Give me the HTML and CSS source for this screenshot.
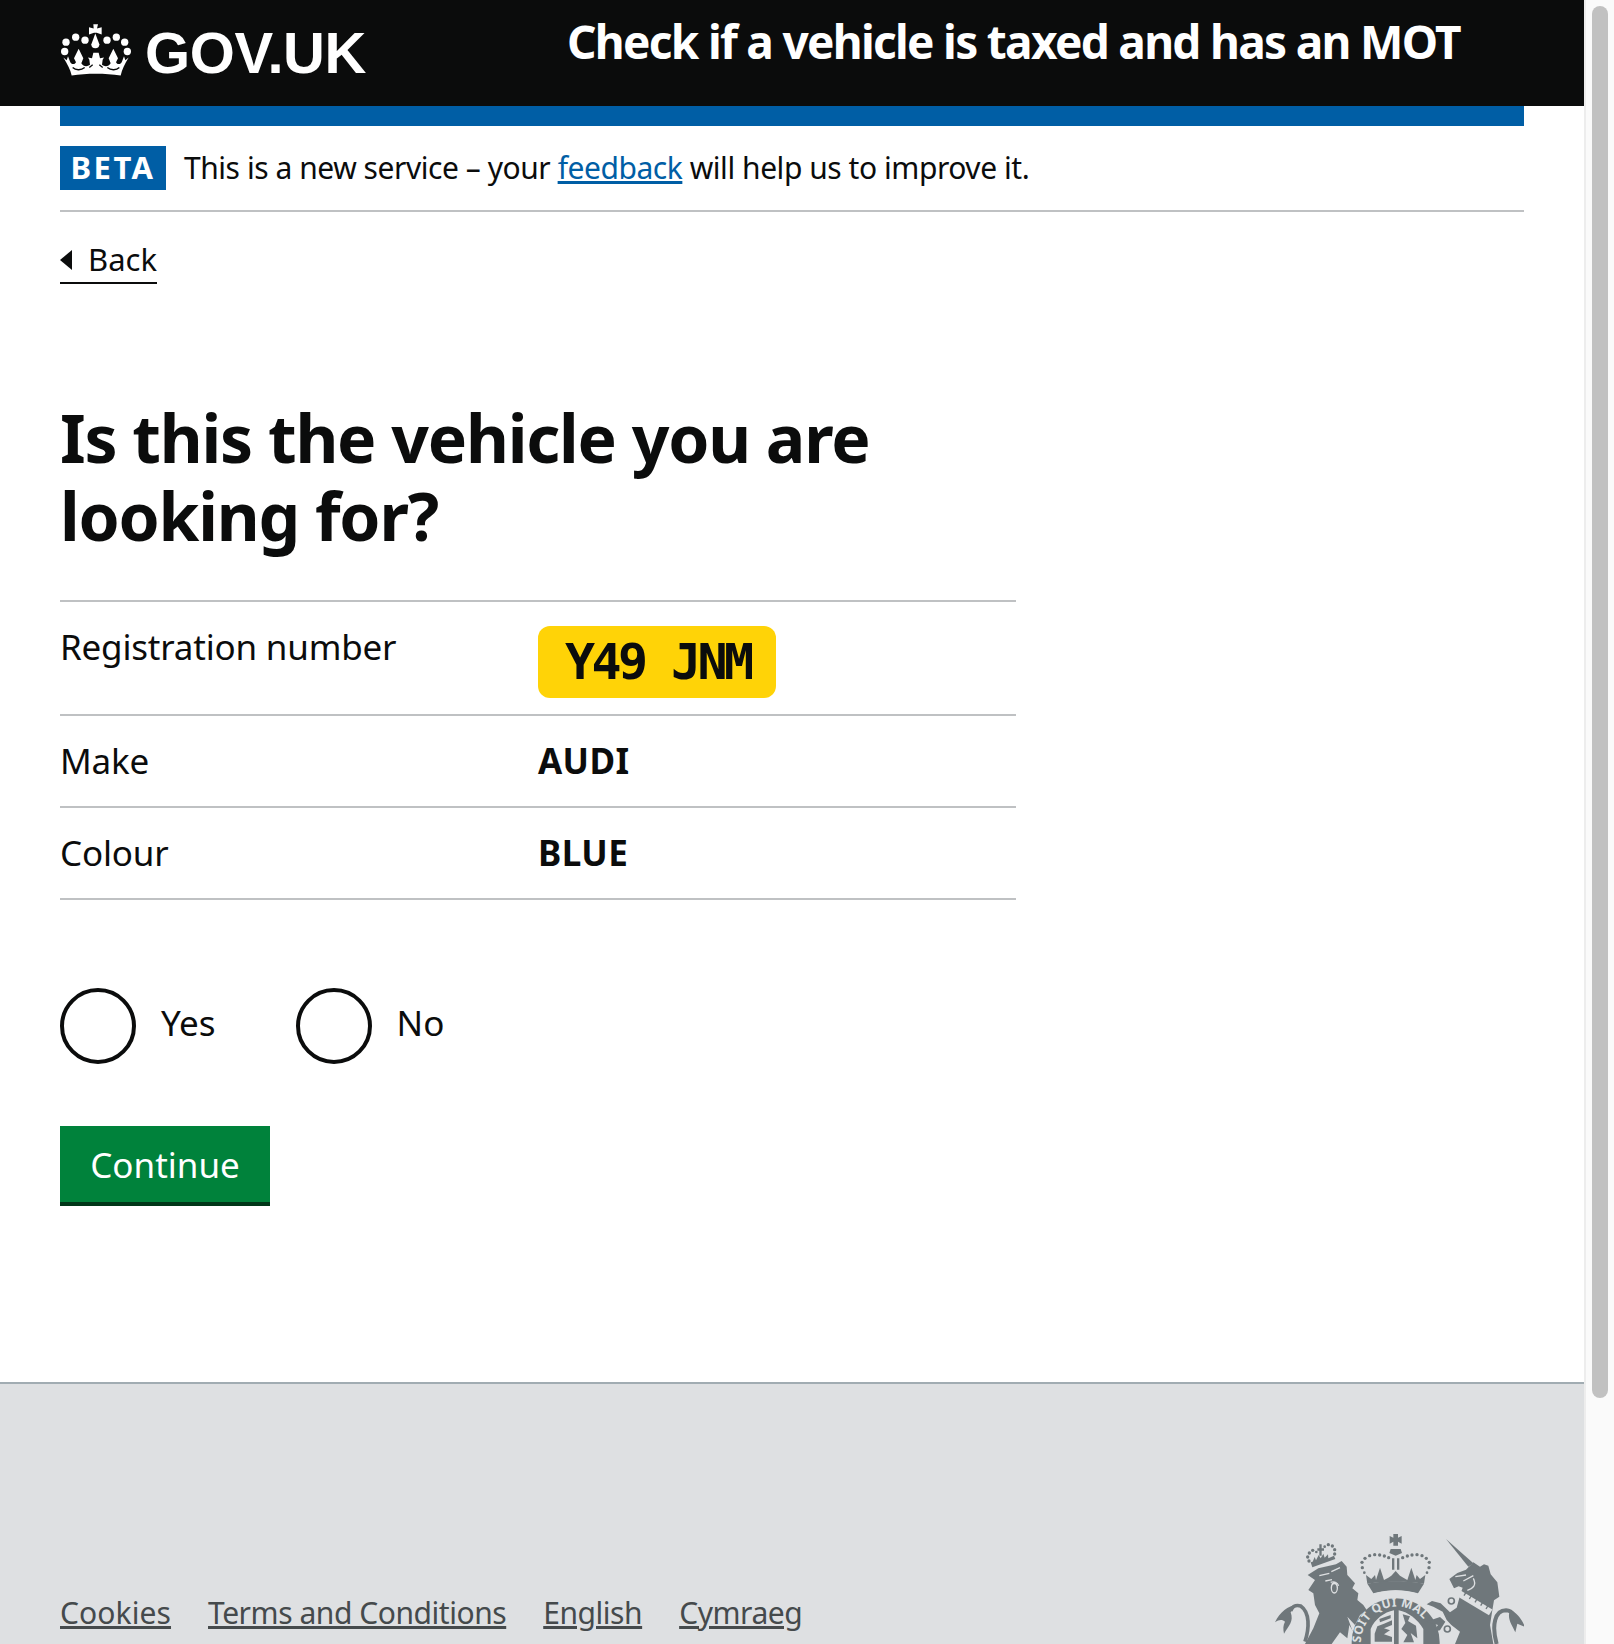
FILE: index.html
```html
<!doctype html>
<html lang="en">
<head>
   <title>Check if a vehicle is taxed and has an MOT</title>
   <meta charset="utf-8">
   <link rel="stylesheet" href="styles.css">
</head>
<body>

   <div class="page">

      <header class="top">
         <a class="logo" href="#">
            <svg class="crown" viewBox="33 28 210 155" aria-hidden="true">
               <circle cx="44" cy="110" r="11"/><circle cx="48" cy="82" r="11"/><circle cx="77" cy="67" r="11"/><circle cx="105" cy="76" r="11"/>
               <circle cx="171" cy="76" r="11"/><circle cx="199" cy="67" r="11"/><circle cx="224" cy="82" r="11"/><circle cx="232" cy="110" r="11"/>
               <path d="M130 28h14l-3 13 14-4v22l-15-5h-8l-15 5V37l14 4z"/>
               <path d="M136 56l12 32a12 12 0 1 1-24 0z"/>
               <path d="M40 128L50 136L54 124L60 140C64 150 74 150 78 142L72 130L86 102L100 130L94 145C100 156 112 156 120 150L118 135L114 128L126 130L130 114H146L150 130L162 128L158 135L156 150C164 156 176 156 182 145L176 130L190 102L204 130L198 142C202 150 212 150 216 140L222 124L226 136L236 128C224 148 216 164 212 182C165 175 110 175 65 182C61 164 52 148 40 128Z"/>
               <path class="crown-cut" d="M68 158C78 168 94 166 104 158M172 158C182 166 198 168 208 158M118 158L128 150M158 158L148 150"/>
            </svg>
            <span class="logo-text">GOV.UK</span>
         </a>
         <a class="service-name" href="#">Check if a vehicle is taxed and has an MOT</a>
      </header>

      <div class="wrap">
         <div class="blue-bar"></div>

         <div class="phase">
            <strong class="tag">BETA</strong>
            <span>This is a new service – your <a href="#">feedback</a> will help us to improve it.</span>
         </div>

         <a class="back" href="#">Back</a>

         <h1>Is this the vehicle you are looking for?</h1>

         <dl class="details">
            <div class="row row-plate">
               <dt>Registration number</dt>
               <dd><span class="plate">Y49 JNM</span></dd>
            </div>
            <div class="row">
               <dt>Make</dt>
               <dd>AUDI</dd>
            </div>
            <div class="row">
               <dt>Colour</dt>
               <dd>BLUE</dd>
            </div>
         </dl>

         <div class="radios">
            <label class="radio"><span class="circle"></span><span class="radio-text">Yes</span></label>
            <label class="radio"><span class="circle"></span><span class="radio-text">No</span></label>
         </div>

         <button class="button" type="button">Continue</button>
      </div>

      <footer class="foot">
         <ul class="foot-links">
            <li><a href="#">Cookies</a></li>
            <li><a href="#">Terms and Conditions</a></li>
            <li><a href="#">English</a></li>
            <li><a href="#">Cymraeg</a></li>
         </ul>

         <!-- royal arms, cut off by the bottom of the window -->
         <svg class="crest" viewBox="0 0 792 357" aria-hidden="true">
            <!-- lion -->
            <path d="M143 150L175 130L228 118L245 108L260 125L262 150L285 175L277 190L295 205L292 225L310 240L320 255L300 270L285 300L262 275L280 325L300 357L135 357L160 310L178 265L165 240L160 205L145 195L165 165Z"/>
            <path class="thin-dark" d="M135 350C148 310 150 262 122 243C106 238 96 246 92 258"/>
            <path d="M110 238C84 244 60 260 45 292C58 282 68 284 75 290C69 300 69 312 72 326C86 302 102 290 92 262Z"/>
            <path class="thin-light" d="M178 152L208 145M214 140L240 128M196 168L216 164M212 172C222 168 232 172 236 182"/>
            <ellipse class="light" cx="223" cy="188" rx="11" ry="18"/>
            <ellipse cx="223" cy="190" rx="7" ry="12"/>
            <path class="light" d="M215 357L240 322L262 340L268 300L285 330L300 357Z"/>
            <!-- lion's crown -->
            <path d="M157 127L226 102L222 92L205 100L204 88L194 98L190 86L182 100L176 90L168 106L164 96L158 110L152 112Z"/>
            <path d="M172 70H178V58H185V70H192V77H185V92H178V77H172Z"/>
            <g>
               <circle cx="147" cy="108" r="5"/><circle cx="143" cy="96" r="5"/><circle cx="148" cy="84" r="5"/><circle cx="158" cy="76" r="5"/><circle cx="169" cy="81" r="4"/>
               <circle cx="194" cy="65" r="4"/><circle cx="205" cy="59" r="5"/><circle cx="217" cy="63" r="5"/><circle cx="224" cy="74" r="5"/><circle cx="224" cy="87" r="5"/>
            </g>
            <!-- middle crown -->
            <path d="M400 27H414V38L425 33V56L414 50V62H400V50L389 56V33L400 38Z"/>
            <path d="M392 72H422L426 84L407 92L388 84Z"/>
            <path d="M396 100H403V134H396ZM411 100H418V134H411Z"/>
            <g>
               <circle cx="307" cy="128" r="5"/><circle cx="306" cy="112" r="5"/><circle cx="315" cy="100" r="5"/><circle cx="329" cy="92" r="5"/><circle cx="344" cy="89" r="5"/><circle cx="359" cy="90" r="5"/><circle cx="373" cy="93" r="5"/><circle cx="386" cy="98" r="5"/>
               <circle cx="428" cy="98" r="5"/><circle cx="442" cy="93" r="5"/><circle cx="456" cy="90" r="5"/><circle cx="471" cy="89" r="5"/><circle cx="486" cy="92" r="5"/><circle cx="499" cy="100" r="5"/><circle cx="508" cy="112" r="5"/><circle cx="507" cy="128" r="5"/>
               <circle cx="313" cy="143" r="4"/><circle cx="501" cy="143" r="4"/>
            </g>
            <path d="M322 176L318 150L334 162L345 150L348 165L360 128L372 165L385 158L394 152L407 138L420 152L430 158L442 165L454 128L466 165L470 150L480 162L496 150L492 176C455 168 360 168 322 176Z"/>
            <path d="M322 176C360 166 455 166 492 176L474 205C430 193 385 193 340 205Z"/>
            <!-- garter and shield -->
            <circle cx="407" cy="352" r="132"/>
            <path class="light" d="M333 222C333 206 350 200 407 196C464 200 482 206 482 222C440 208 375 208 333 222Z"/>
            <path id="motto" class="none" d="M303 357A105 105 0 0 1 515 345"/>
            <text class="motto"><textPath href="#motto" startOffset="4">SOIT QUI MAL</textPath></text>
            <path class="light" d="M332 357V312C345 282 372 262 402 256V357ZM416 256C445 262 472 282 490 312V357H416Z"/>
            <path d="M344 326L352 304L372 296L396 286V300L372 310L390 316L372 328L396 336V350H344ZM358 282L392 270V280L360 292Z"/>
            <path d="M428 268L450 274L444 288L468 302L472 340L452 324L462 352H430L442 330L424 312L436 294Z"/>
            <!-- unicorn -->
            <path d="M558 42L640 115L625 125Z"/>
            <path d="M640 112L660 125L672 118L685 122L692 148L712 172L718 215L702 226L696 262L690 300L700 357H585L600 320L574 300L560 285L548 260L520 245L500 238L516 228L542 235L570 262L590 248L602 205L608 188L596 184L582 190L568 162L592 144L618 134Z"/>
            <path class="thin-dark-2" d="M710 357C694 300 705 256 738 256C760 258 768 278 768 292"/>
            <path d="M750 256C770 262 785 282 795 306L772 296L766 322C756 300 740 280 750 256Z"/>
            <path class="collar" d="M598 206L692 262"/>
            <path class="thin-light" d="M586 155L618 150M610 168L640 152M640 160C650 180 640 190 622 196"/>
            <path class="thin-dark-3" d="M612 212L618 202M628 222L634 212M645 232L651 222M662 242L668 232M678 252L684 242"/>
            <circle class="ring" cx="574" cy="228" r="9"/>
            <circle class="ring" cx="562" cy="312" r="9"/>
            <path d="M498 290L540 276L556 290L540 316L520 320L534 300Z"/>
         </svg>
      </footer>

   </div>

   <!-- the browser's own scrollbar as it was in the picture -->
   <div class="scrollbar"><div class="thumb"></div></div>

</body>
</html>
```

FILE: styles.css
```css
html{
   height: 100%;
   overflow: hidden;
}

body{
   display: flex;
   height: 1644px;
   margin: 0;
   overflow: hidden;
   background: #fff;
   color: #0b0c0c;
   font-family: "Noto Sans", sans-serif;
   font-size: 35px;
   line-height: 40px;
}

.page{
   display: flex;
   flex-direction: column;
   width: 1584px;
   flex: none;
}

/* header */
.top{
   display: flex;
   height: 106px;
   flex: none;
   padding-left: 60px;
   background: #0b0c0c;
}

.logo{
   display: flex;
   align-items: flex-start;
   width: 507px;
   padding-top: 24px;
   color: #fff;
   text-decoration: none;
}

.crown{
   width: 70px;
   height: 52px;
   flex: none;
   margin-left: 1px;
   fill: #fff;
}

.crown-cut{
   fill: none;
   stroke: #0b0c0c;
   stroke-width: 4;
}

.logo-text{
   margin-left: 14px;
   font-family: "Liberation Sans", sans-serif;
   font-size: 58px;
   font-weight: 700;
   line-height: 58px;
   letter-spacing: -.4px;
}

.service-name{
   padding-top: 15px;
   color: #fff;
   font-size: 46px;
   font-weight: 700;
   line-height: 52px;
   letter-spacing: -1.7px;
   text-decoration: none;
}

.wrap{
   flex: none;
   height: 1276px;
   padding: 0 60px;
}

.blue-bar{
   height: 20px;
   background: #005ea5;
}

.phase{
   display: flex;
   align-items: center;
   gap: 18px;
   padding: 20px 0;
   border-bottom: 2px solid #bfc1c3;
   font-size: 30px;
   letter-spacing: -.45px;
}

.phase a{
   color: #005ea5;
}

.tag{
   width: 106px;
   height: 44px;
   background: #005ea5;
   color: #fff;
   font-size: 31px;
   line-height: 42px;
   letter-spacing: 2.5px;
   text-align: center;
}

.back{
   display: table;
   position: relative;
   margin-top: 30px;
   padding-left: 28px;
   padding-bottom: 6px;
   border-bottom: 2px solid #0b0c0c;
   color: #0b0c0c;
   font-size: 31px;
   line-height: 34px;
   text-decoration: none;
}

.back:before{
   content: "";
   position: absolute;
   left: 0;
   top: 8px;
   border-style: solid;
   border-width: 10px 12px 10px 0;
   border-color: transparent #0b0c0c transparent transparent;
}

h1{
   width: 956px;
   margin: 114px 0 46px;
   font-size: 66px;
   font-weight: 700;
   line-height: 78px;
   letter-spacing: -1.2px;
}

.details{
   width: 956px;
   margin: 0;
   border-top: 2px solid #bfc1c3;
}

.row{
   display: flex;
   height: 92px;
   padding-top: 25px;
   box-sizing: border-box;
   border-bottom: 2px solid #bfc1c3;
   letter-spacing: -.2px;
}

.row-plate{
   height: 114px;
   padding-top: 24px;
}

.row-plate dt{
   padding-top: 1px;
}

dt{
   width: 478px;
   margin: 0;
}

dd{
   margin: 0;
   font-weight: 700;
   letter-spacing: .4px;
}

.plate{
   display: block;
   width: 238px;
   height: 72px;
   padding-left: 27px;
   box-sizing: border-box;
   border-radius: 12px;
   background: #ffd307;
   font-family: "DejaVu Sans Mono", monospace;
   font-size: 50px;
   line-height: 72px;
   letter-spacing: -3.6px;
}

.radios{
   display: flex;
   gap: 80px;
   margin-top: 88px;
}

.radio{
   display: flex;
   align-items: center;
   gap: 25px;
}

.radio-text{
   padding-bottom: 6px;
}

.circle{
   width: 76px;
   height: 76px;
   box-sizing: border-box;
   border: 4px solid #0b0c0c;
   border-radius: 50%;
}

.button{
   display: block;
   width: 210px;
   height: 76px;
   margin-top: 62px;
   padding: 2px 0 0;
   border: 0;
   box-shadow: 0 4px 0 #003618;
   background: #00823b;
   color: #fff;
   font-family: inherit;
   font-size: 35px;
   line-height: 40px;
}

/* footer */
.foot{
   display: flex;
   justify-content: space-between;
   flex: 1;
   min-height: 0;
   padding: 0 60px;
   border-top: 2px solid #a1acb2;
   background: #dee0e2;
}

.foot-links{
   display: flex;
   gap: 37px;
   margin: 209px 0 0;
   padding: 0;
   list-style: none;
   font-size: 30px;
   letter-spacing: -.45px;
}

.foot-links li:first-child{
   letter-spacing: .1px;
}

.foot-links a{
   color: #454a4c;
}

.crest{
   width: 264px;
   height: 119px;
   margin-top: 141px;
   flex: none;
   fill: #6f777b;
}

.crest .light{
   fill: #dee0e2;
}

.crest .none{
   fill: none;
}

.crest .thin-dark{
   fill: none;
   stroke: #6f777b;
   stroke-width: 11;
}

.crest .thin-dark-2{
   fill: none;
   stroke: #6f777b;
   stroke-width: 12;
}

.crest .thin-dark-3{
   fill: none;
   stroke: #6f777b;
   stroke-width: 4;
}

.crest .thin-light{
   fill: none;
   stroke: #dee0e2;
   stroke-width: 4;
}

.crest .collar{
   fill: none;
   stroke: #dee0e2;
   stroke-width: 20;
}

.crest .ring{
   fill: none;
   stroke: #6f777b;
   stroke-width: 5;
}

.crest .motto{
   fill: #dee0e2;
   font-family: "Noto Sans", sans-serif;
   font-size: 36px;
   font-weight: 700;
   letter-spacing: 1px;
}

/* scrollbar */
.scrollbar{
   flex: 1;
   padding: 6px 6px 0 6px;
   border-left: 2px solid #ededed;
   border-right: 2px solid #f4f4f4;
   background: #fafafa;
}

.thumb{
   width: 16px;
   height: 1392px;
   border-radius: 8px;
   background: #c1c1c1;
}
```
